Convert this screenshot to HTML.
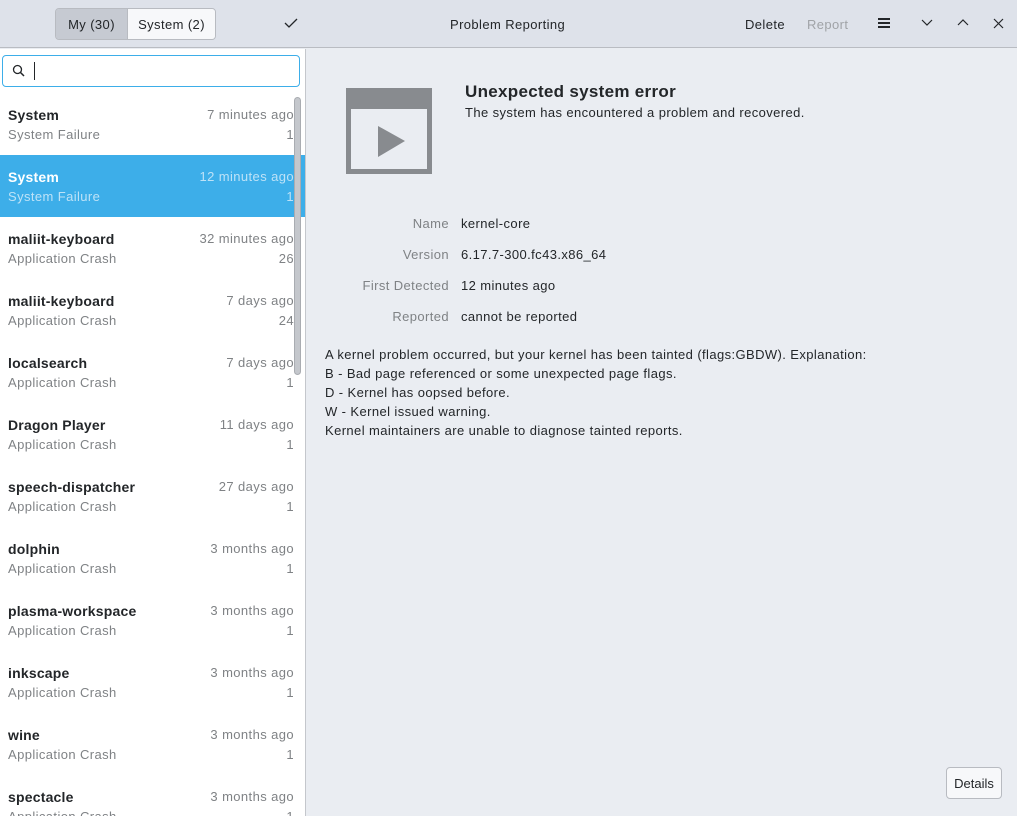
<!DOCTYPE html>
<html><head><meta charset="utf-8"><style>
*{box-sizing:border-box;margin:0;padding:0}
body{width:1017px;height:816px;overflow:hidden;background:#eaedf2;font-family:"Liberation Sans","DejaVu Sans",sans-serif;font-size:13px;letter-spacing:0.4px;color:#232629;position:relative}
.hdr{position:absolute;left:0;top:0;width:1017px;height:48px;background:#dee2ea;border-bottom:1px solid #b9bcc2}
.seg{position:absolute;left:55px;top:8px;height:32px;width:161px;border:1px solid #b8bbc1;border-radius:4px;overflow:hidden;display:flex}
.seg div{display:flex;align-items:center;justify-content:center;font-size:13px}
.abs{position:absolute}
.left{position:absolute;left:0;top:49px;width:306px;height:767px;background:#fff;border-right:1px solid #c4c7cc;overflow:hidden}
.search{position:absolute;left:2px;top:6px;width:298px;height:32px;border:1px solid #3daee9;border-radius:4px;background:#fff}
.item{position:absolute;left:0;width:306px;height:62px}
.item .t{position:absolute;left:8px;top:14px;font-weight:bold;font-size:14px;letter-spacing:0.2px}
.item .s{position:absolute;left:8px;top:34px;color:#7f8285;font-size:13px}
.item .d{position:absolute;right:12px;top:14px;color:#7f8285;font-size:13px}
.item .n{position:absolute;right:12px;top:34px;color:#7f8285;font-size:13px}
.sel{background:#3daee9}
.sel .t{color:#fff}.sel .s,.sel .d,.sel .n{color:#bde2f7}
.lbl{position:absolute;width:140px;text-align:right;left:309px;color:#7f8285}
.val{position:absolute;left:461px}
</style></head><body>
<div class="hdr">
 <div class="seg"><div style="width:72px;background:#c6cad2;border-right:1px solid #b8bbc1">My (30)</div><div style="flex:1;background:#f7f8fa">System (2)</div></div>
 <svg class="abs" style="left:284px;top:17px" width="14" height="12"><path d="M1 6 L5 10 L13 2" stroke="#232629" stroke-width="1.3" fill="none"/></svg>
 <div class="abs" style="left:450px;top:17px">Problem Reporting</div>
 <div class="abs" style="left:745px;top:17px">Delete</div>
 <div class="abs" style="left:807px;top:17px;color:#a0a3a7">Report</div>
 <svg class="abs" style="left:877px;top:17px" width="14" height="12"><path d="M1 2H13M1 6H13M1 10H13" stroke="#232629" stroke-width="2"/></svg>
 <svg class="abs" style="left:921px;top:19px" width="12" height="8"><path d="M1 1L6 6L11 1" stroke="#232629" stroke-width="1.2" fill="none"/></svg>
 <svg class="abs" style="left:957px;top:18px" width="12" height="8"><path d="M1 7L6 2L11 7" stroke="#232629" stroke-width="1.2" fill="none"/></svg>
 <svg class="abs" style="left:993px;top:18px" width="11" height="11"><path d="M1 1L10 10M10 1L1 10" stroke="#232629" stroke-width="1.2"/></svg>
</div>
<div class="left">
 <div class="search">
  <svg class="abs" style="left:9px;top:8px" width="14" height="14"><circle cx="5.5" cy="5.5" r="4" stroke="#232629" stroke-width="1.3" fill="none"/><path d="M8.5 8.5L12 12" stroke="#232629" stroke-width="1.5"/></svg>
  <div class="abs" style="left:31px;top:6px;width:1px;height:18px;background:#232629"></div>
 </div>
 <div class="item" style="top:44px"><div class="t">System</div><div class="s">System Failure</div><div class="d">7 minutes ago</div><div class="n">1</div></div>
 <div class="item sel" style="top:106px"><div class="t">System</div><div class="s">System Failure</div><div class="d">12 minutes ago</div><div class="n">1</div></div>
 <div class="item" style="top:168px"><div class="t">maliit-keyboard</div><div class="s">Application Crash</div><div class="d">32 minutes ago</div><div class="n">26</div></div>
 <div class="item" style="top:230px"><div class="t">maliit-keyboard</div><div class="s">Application Crash</div><div class="d">7 days ago</div><div class="n">24</div></div>
 <div class="item" style="top:292px"><div class="t">localsearch</div><div class="s">Application Crash</div><div class="d">7 days ago</div><div class="n">1</div></div>
 <div class="item" style="top:354px"><div class="t">Dragon Player</div><div class="s">Application Crash</div><div class="d">11 days ago</div><div class="n">1</div></div>
 <div class="item" style="top:416px"><div class="t">speech-dispatcher</div><div class="s">Application Crash</div><div class="d">27 days ago</div><div class="n">1</div></div>
 <div class="item" style="top:478px"><div class="t">dolphin</div><div class="s">Application Crash</div><div class="d">3 months ago</div><div class="n">1</div></div>
 <div class="item" style="top:540px"><div class="t">plasma-workspace</div><div class="s">Application Crash</div><div class="d">3 months ago</div><div class="n">1</div></div>
 <div class="item" style="top:602px"><div class="t">inkscape</div><div class="s">Application Crash</div><div class="d">3 months ago</div><div class="n">1</div></div>
 <div class="item" style="top:664px"><div class="t">wine</div><div class="s">Application Crash</div><div class="d">3 months ago</div><div class="n">1</div></div>
 <div class="item" style="top:726px"><div class="t">spectacle</div><div class="s">Application Crash</div><div class="d">3 months ago</div><div class="n">1</div></div>
 <div class="abs" style="left:294px;top:48px;width:7px;height:278px;background:#c4c7cc;border:1px solid #a9acb1;border-radius:4px"></div>
</div>
<svg class="abs" style="left:346px;top:88px" width="86" height="86"><rect x="0" y="0" width="86" height="86" fill="#888b8f"/><rect x="5" y="21" width="76" height="60" fill="#eaedf2"/><path d="M32 38L59 53L32 69Z" fill="#888b8f"/></svg>
<div class="abs" style="left:465px;top:82px;font-weight:bold;font-size:17px;letter-spacing:0.3px">Unexpected system error</div>
<div class="abs" style="left:465px;top:105px">The system has encountered a problem and recovered.</div>
<div class="lbl" style="top:216px">Name</div><div class="val" style="top:216px">kernel-core</div>
<div class="lbl" style="top:247px">Version</div><div class="val" style="top:247px">6.17.7-300.fc43.x86_64</div>
<div class="lbl" style="top:278px">First Detected</div><div class="val" style="top:278px">12 minutes ago</div>
<div class="lbl" style="top:309px">Reported</div><div class="val" style="top:309px">cannot be reported</div>
<div class="abs" style="left:325px;top:345px;line-height:19px">A kernel problem occurred, but your kernel has been tainted (flags:GBDW). Explanation:<br>B - Bad page referenced or some unexpected page flags.<br>D - Kernel has oopsed before.<br>W - Kernel issued warning.<br>Kernel maintainers are unable to diagnose tainted reports.</div>
<div class="abs" style="left:946px;top:767px;width:56px;height:32px;border:1px solid #b8bbc1;border-radius:4px;background:#f7f8fa;display:flex;align-items:center;justify-content:center;letter-spacing:0">Details</div>
</body></html>
